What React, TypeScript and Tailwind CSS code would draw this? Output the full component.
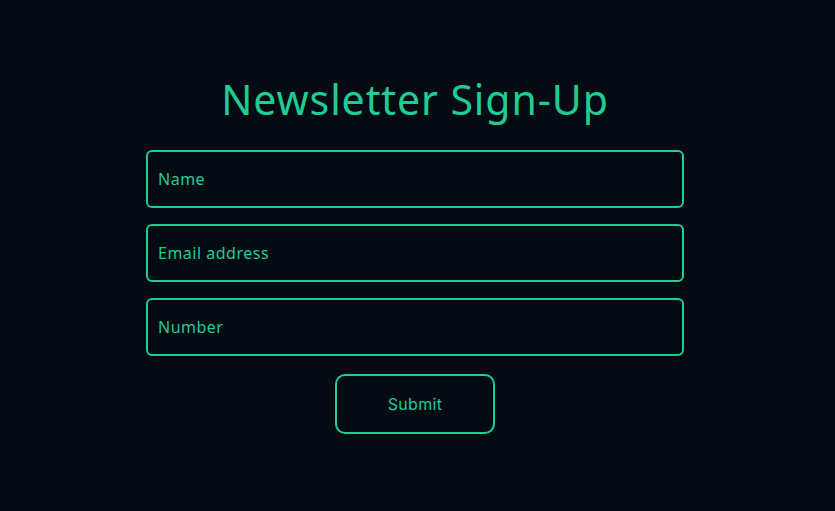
import { useState } from "react";

const fields = [
  { name: "name", placeholder: "Name", type: "text" },
  { name: "email", placeholder: "Email address", type: "email" },
  { name: "number", placeholder: "Number", type: "tel" },
];

export default function App() {
  const [values, setValues] = useState<Record<string, string>>({});

  return (
    <div className="min-h-screen w-full bg-[#040b13] pr-[5px] font-['Noto_Sans',sans-serif]">
      <div className="mx-auto flex w-[538px] flex-col items-center pt-[70px]">
        <h1 className="h-[64px] text-[41px] leading-[58px] font-normal tracking-[0.9px] text-[#1fcc93]">
          Newsletter Sign-Up
        </h1>
        <form
          className="mt-[16px] flex w-full flex-col gap-[16px]"
          onSubmit={(e) => e.preventDefault()}
        >
          {fields.map((f) => (
            <input
              key={f.name}
              type={f.type}
              placeholder={f.placeholder}
              value={values[f.name] ?? ""}
              onChange={(e) => setValues({ ...values, [f.name]: e.target.value })}
              className="h-[58px] w-full rounded-[6px] border-2 border-[#1fcc93] bg-transparent pl-[10px] text-[16px] tracking-[0.5px] text-[#1fcc93] outline-none placeholder:text-[#1fcc93]"
            />
          ))}
          <div className="mt-[2px] flex justify-center">
            <button
              type="submit"
              className="h-[60px] w-[160px] rounded-[10px] border-2 border-[#1fcc93] bg-transparent font-['Inter',sans-serif] text-[16px] tracking-[0.3px] text-[#1fcc93]"
            >
              Submit
            </button>
          </div>
        </form>
      </div>
    </div>
  );
}
